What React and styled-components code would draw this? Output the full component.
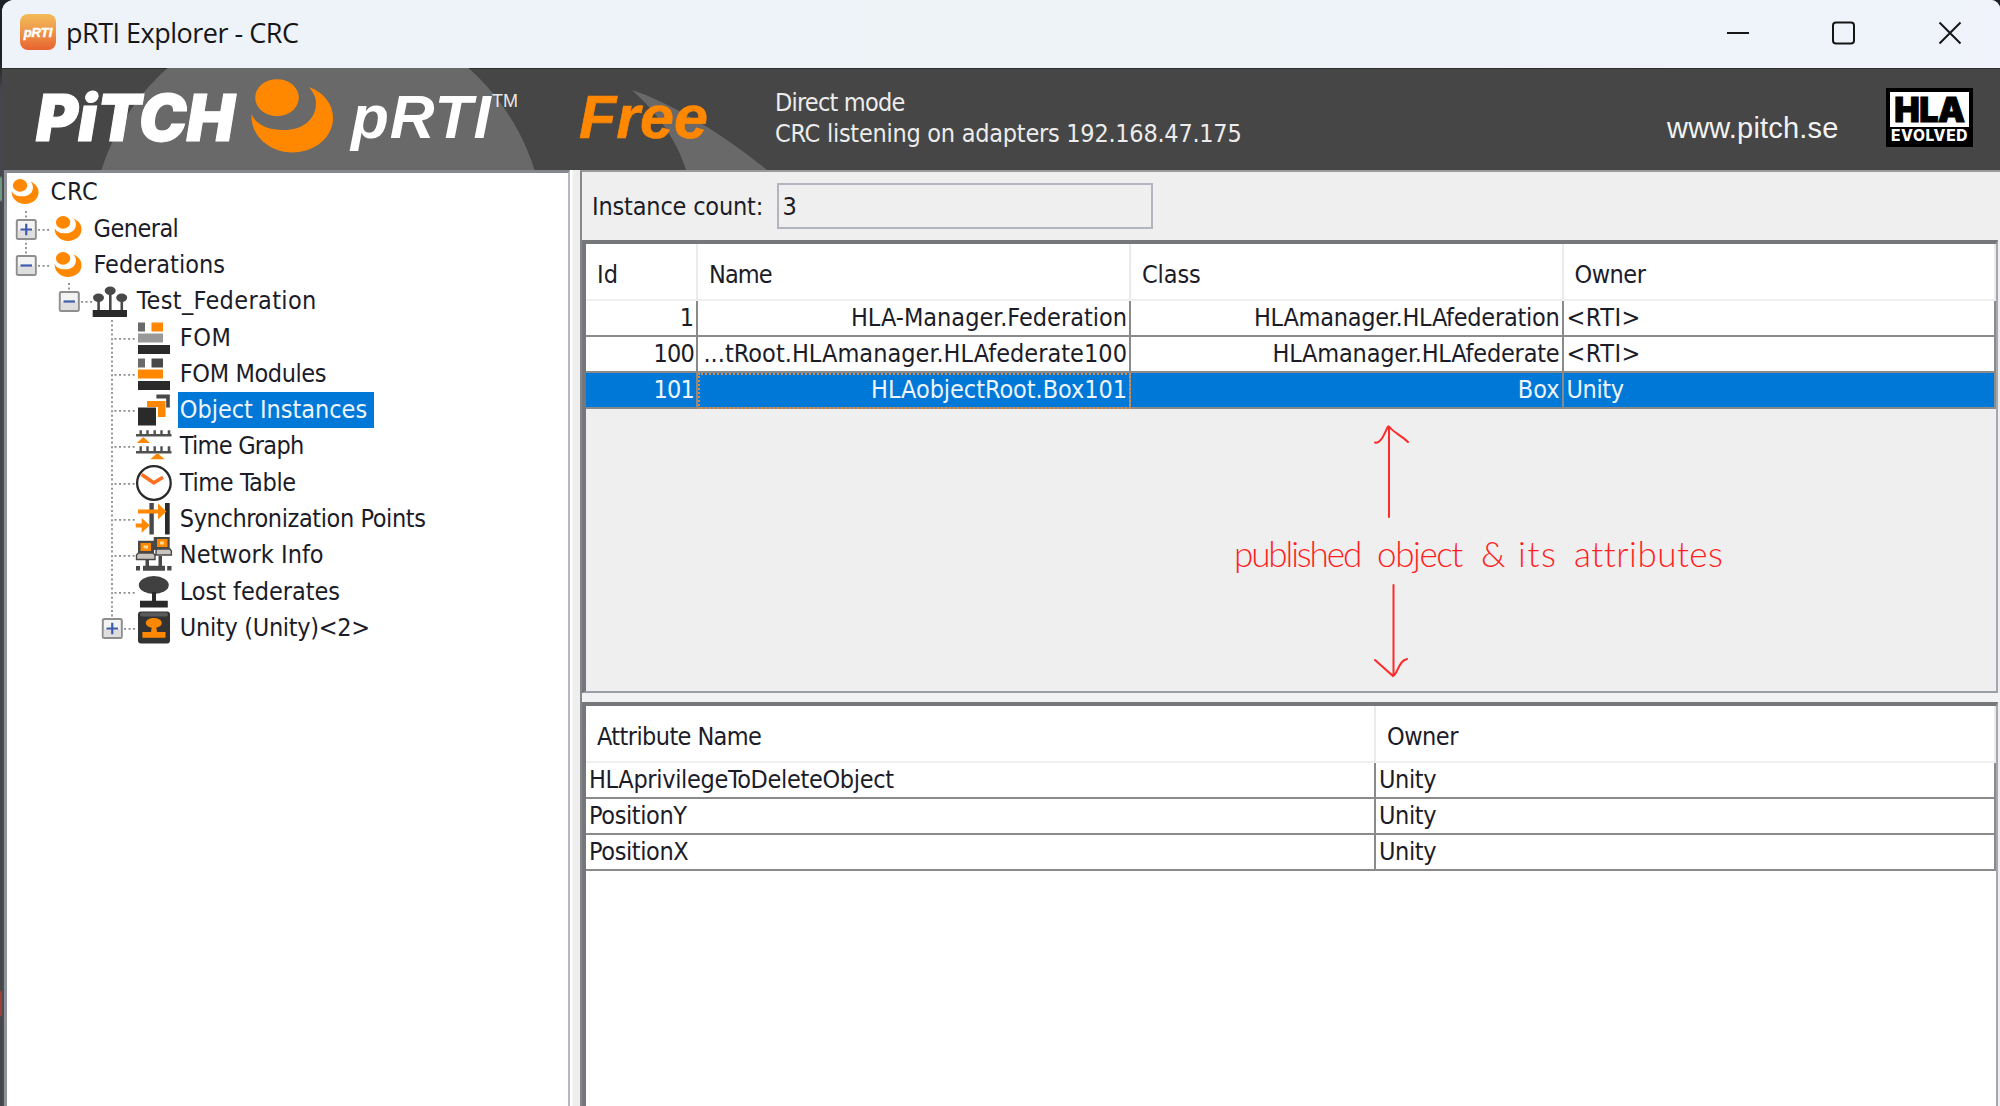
import React from "react";
import styled, { createGlobalStyle, css } from "styled-components";

const Global = createGlobalStyle`
  * { box-sizing: border-box; }
  body { margin: 0; background: #33363b; overflow: hidden; }
`;

const ORANGE = "#ff8800";
const uiFont = css`
  font-family: "DejaVu Sans Condensed", "DejaVu Sans", sans-serif;
  font-stretch: condensed;
  font-size: 25px;
`;

const Desktop = styled.div`
  width: 2000px;
  height: 1106px;
  padding-left: 2px;
  background: linear-gradient(#1d2024 0 60px, #44474d 90px 176px, #6f9880 178px 200px, #45464a 202px 990px, #9a4038 992px 1015px, #45464a 1017px);
  overflow: hidden;
`;
const Win = styled.div`
  display: flex;
  flex-direction: column;
  height: 1106px;
  border-radius: 12px 9px 0 0;
  overflow: hidden;
  background: #efefef;
`;

/* ---------- title bar ---------- */
const TitleBar = styled.div`
  height: 68px;
  flex: none;
  display: flex;
  align-items: center;
  padding: 0 38px 3px 18px;
  background: linear-gradient(90deg, #eef3f9, #eef3f8 60%, #f0f3fb);
`;
const AppIcon = styled.div`
  width: 36px;
  height: 36px;
  margin-top: -2px;
  border-radius: 8px;
  background: linear-gradient(#f3bb58, #ee9a4c 45%, #e8622f);
  color: #fff;
  font: italic 700 13px/37px "Liberation Sans", sans-serif;
  text-align: center;
  -webkit-text-stroke: 0.5px #fff;
`;
const Title = styled.div`
  margin: 0 auto 0 10px;
  font: 400 27px/40px "Open Sans", sans-serif;
  letter-spacing: -0.5px;
  color: #161616;
`;
const Controls = styled.div`
  display: flex;
  gap: 82px;
  svg { display: block; }
`;

/* ---------- banner ---------- */
const Banner = styled.header`
  position: relative;
  flex: none;
  display: flex;
  height: 102px;
  background: #464646;
  border-top: 1px solid #2e2e2e;
  white-space: nowrap;
`;
const Backdrop = styled.svg`
  position: absolute;
  left: 0;
  top: -1px;
`;
const Word = styled.div`
  position: relative;
  flex: none;
  width: ${(p) => p.$w}px;
  margin-left: ${(p) => p.$ml || 0}px;
  padding-top: ${(p) => p.$pt || 0}px;
  color: ${(p) => p.$color || "#fff"};
  font: italic ${(p) => (p.$black ? 900 : 700)} ${(p) => p.$size}px/70px ${(p) => (p.$black ? "Inter," : "")} "Liberation Sans", Arial, sans-serif;
  letter-spacing: ${(p) => p.$ls || 0}px;
  -webkit-text-stroke: ${(p) => p.$stroke || 0}px ${(p) => p.$color || "#fff"};
`;
const Trade = styled.div`
  position: relative;
  width: 62px;
  padding: 22px 0 0 1px;
  color: #e8e8e8;
  font: 400 18px/20px "Liberation Sans", Arial, sans-serif;
`;
const Mode = styled.div`
  ${uiFont}
  position: relative;
  color: #ececec;
  line-height: 31.6px;
  padding-top: 17.5px;
  margin-left: 66px;
  flex: 1;
`;
const Site = styled.div`
  padding-top: 41px;
  width: 219px;
  color: #f2f2f2;
  font: 400 29px/36px "Liberation Sans", Arial, sans-serif;
  letter-spacing: 0.2px;
`;
const Hla = styled.div`
  width: 87px;
  height: 59px;
  margin: 19px 27px 0 0;
  border: 4px solid #000;
  border-bottom-width: 3px;
  background: #000;
  text-align: center;
`;
const HlaTop = styled.div`
  height: 35px;
  background: #fff;
  color: #000;
  font: 900 34px/35px Inter, "Liberation Sans", sans-serif;
  letter-spacing: -0.5px;
  -webkit-text-stroke: 1px #000;
`;
const HlaBottom = styled.div`
  color: #fff;
  font: 800 15.5px/18px Inter, "Liberation Sans", sans-serif;
  letter-spacing: 0.6px;
`;

/* ---------- body ---------- */
const Body = styled.div`
  flex: 1;
  display: flex;
  min-height: 0;
  padding-left: 2px;
  background: linear-gradient(90deg, #4a4c50 0 2px, #efefef 2px);
`;
const TreePane = styled.nav`
  width: 566px;
  border-style: solid;
  border-width: 3px 2px 0 3px;
  border-color: #85888e #b3b7bf #fff #8f9298;
  background: #fff;
  padding-top: 1.4px;
`;
const Split = styled.div`
  width: 10px;
  background: linear-gradient(90deg, #fff 0 2px, #eee 3px);
`;
const Right = styled.div`
  flex: 1;
  min-width: 0;
  display: flex;
  flex-direction: column;
  border-left: 2px solid #85878b;
  border-top: 2px solid #9a9a9a;
`;
const Row = styled.div`
  display: flex;
  align-items: center;
  height: 36.3px;
  svg { display: block; flex: none; }
`;
const Indent = styled.span`
  width: ${(p) => p.$n * 43.15}px;
`;
const IconBox = styled.span`
  width: 36.3px;
  height: 36.3px;
  margin-right: 5.7px;
`;
const Label = styled.span`
  ${uiFont}
  line-height: 36.3px;
  height: 36.3px;
  white-space: pre;
  padding: 0 7px 0 1.4px;
  color: ${(p) => (p.$on ? "#eef5ff" : "#1c1c28")};
  background: ${(p) => (p.$on ? "#0078d7" : "transparent")};
  letter-spacing: ${(p) => p.$ls || 0}px;
`;
const Text = styled.span`
  letter-spacing: ${(p) => p.$ls || 0}px;
  white-space: pre;
`;

const CountBar = styled.div`
  ${uiFont}
  height: 68px;
  flex: none;
  display: flex;
  align-items: center;
  padding: 0 0 0 10px;
  color: #1c1c28;
`;
const CountLabel = styled.label`
  width: 184.5px;
  padding-top: 1px;
`;
const CountField = styled.div`
  width: 376px;
  height: 46px;
  border: 2px solid #b3b6bd;
  padding: 1px 0 0 4px;
  line-height: 42px;
`;
const Table = styled.section`
  ${uiFont}
  color: #1c1c28;
  display: flex;
  flex-direction: column;
  border: 4px solid #75777b;
  border-right: 2px solid #a3a7ae;
  border-bottom: ${(p) => (p.$last ? 0 : "2px solid #9a9fa7")};
  margin-right: 2px;
  height: ${(p) => (p.$last ? "auto" : "453px")};
  flex: ${(p) => (p.$last ? 1 : "none")};
  background: ${(p) => (p.$last ? "#fff" : "#efefef")};
  position: relative;
`;
const Line = styled.div`
  display: grid;
  grid-template-columns: ${(p) => p.$cols};
  flex: none;
  height: ${(p) => (p.$head ? 56.5 : 36.3)}px;
  background: ${(p) => (p.$on ? "#0078d7" : "#fff")};
  color: ${(p) => (p.$on ? "#eef5ff" : "#1c1c28")};
`;
const Th = styled.div`
  border-right: 2px solid #ebebeb;
  border-bottom: 2px solid #efefef;
  padding: 4px 0 0 11px;
  line-height: 53px;
  overflow: hidden;
  letter-spacing: ${(p) => p.$ls || 0}px;
`;
const Td = styled.div`
  border-right: 2px solid #8a8a8a;
  border-bottom: 2px solid #8a8a8a;
  padding: 0 2px 0 3px;
  line-height: 34.3px;
  text-align: ${(p) => (p.$r ? "right" : "left")};
  letter-spacing: ${(p) => p.$ls || 0}px;
  overflow: hidden;
  white-space: nowrap;
  ${(p) => p.$focus && css`
    outline: 2px dotted #d98a45;
    outline-offset: -2px;
  `}
`;
const Divider = styled.div`
  height: 9px;
  flex: none;
  background: #f1f2f3;
`;

/* ---------- annotation ---------- */
const Note = styled.div`
  position: absolute;
  left: 649px;
  top: 176px;
  width: 500px;
  height: 265px;
  color: #ff1f1f;
  pointer-events: none;
  svg { position: absolute; left: 0; top: 0; }
`;
const NoteText = styled.div`
  position: absolute;
  left: -1px;
  top: 113px;
  display: flex;
  font: 300 35px/40px Lato, sans-serif;
`;
const NoteWord = styled.span`
  width: ${(p) => p.$w}px;
  letter-spacing: ${(p) => p.$ls}px;
`;

const Swirl = () => (
  <>
    <ellipse cx="277" cy="97.7" rx="21.8" ry="18.5" />
    <path d="M309 87C325 93 333 105 333 118C333 138 314 152.5 292 152.5C270 152.5 250 136 251.5 114C256 125 268 130 284 130C302 130 316 120 316 103C316 97 313 92 309 87Z" />
  </>
);

const D = "#2a2a2a";
const G = "#6a6a6a";
const icons = {
  swirl: (
    <g fill={ORANGE} transform="translate(4.5 5) scale(.33 .34) translate(-251 -79)">
      <Swirl />
    </g>
  ),
  federation: (
    <g fill={D}>
      <g fill="#484848">
        <ellipse cx="5.5" cy="14.8" rx="5.5" ry="4.2" />
        <ellipse cx="17.2" cy="7.8" rx="5.5" ry="4.2" />
        <ellipse cx="28.7" cy="14.8" rx="5.5" ry="4.2" />
        <path d="M4.3 15h2.6v13H4.3zM16 8h2.6v20H16zM27.5 15h2.6v13h-2.6z" />
      </g>
      <path d="M-.3 27H34v7H-.3z" />
    </g>
  ),
  fom: (
    <g>
      <path fill={G} d="M2 2.5h7v9H2z" />
      <path fill={ORANGE} d="M15.5 2.5H27v9H15.5z" />
      <path fill="#999" d="M2 13.5h25v9H2z" />
      <path fill={D} d="M2 25h32v9H2z" />
    </g>
  ),
  modules: (
    <g>
      <path fill={G} d="M2 2.5h7v9H2z" />
      <path fill="#484848" d="M15.5 2.5H27v9H15.5z" />
      <path fill={ORANGE} d="M2 13.5h25v9H2z" />
      <path fill={D} d="M2 25h32v9H2z" />
    </g>
  ),
  instances: (
    <g>
      <path fill={D} d="M2 15.5h18v18H2z" />
      <path fill={ORANGE} d="M11 9h18.5v16H22v-10H11z" />
      <path fill="#484848" d="M20.4 2.5h13.4v13h-3.6v-9h-9.8z" />
    </g>
  ),
  graph: (
    <g fill="#505050">
      <path d="M0 6h35.5v2.6H0zM3.5 2.2h2.4V7H3.5zM10.3 2.2h2.4V7h-2.4zM17.5 2.2h2.4V7h-2.4zM24.3 2.2h2.4V7h-2.4zM31.7 2.2h2.6V7h-2.6z" />
      <path d="M0 23h35.5v2.6H0zM3.5 18.2h2.4V24H3.5zM10.3 18.2h2.4V24h-2.4zM17.5 18.2h2.4V24h-2.4zM24.3 18.2h2.4V24h-2.4zM31.7 18.2h2.6V24h-2.6z" />
      <path fill={ORANGE} d="M7.4 9l6.6 6H.8zM21.4 25l7.2 6.2H14.2z" />
    </g>
  ),
  clock: (
    <g fill="none">
      <circle cx="17.9" cy="18" r="16.8" stroke={D} strokeWidth="2.3" fill="#fff" />
      <path d="M5.6 9.6L17.8 17.8L27 12.3" stroke="#ff6f20" strokeWidth="3.6" />
    </g>
  ),
  sync: (
    <g fill={D}>
      <path fill="#484848" d="M13.4 2h4.4v31.5h-4.4z" />
      <path d="M29 2h4.7v31.5H29z" />
      <path fill={ORANGE} d="M2 8.6h20v-6l8.5 8-8.5 8v-6H2zM-.3 22.4h6v-5.500l8 7.400-8 7.400v-5.300h-6z" />
    </g>
  ),
  network: (
    <g>
      <path fill="#484848" d="M17.7 0h16v13h-16zM2 3.7h16v13H2zM9.5 22h3.5v7H9.5zM22.5 19H26v10h-3.5zM7 28.7h22v5H7zM0 29h4v4.5H0zM31.2 29h4.3v4.5h-4.3z" />
      <path fill={ORANGE} d="M21 2h10.5v8H21zM4.5 6H15v8H4.5z" />
      <path fill="#ffd9a0" d="M24 4.5h4v3h-4zM7.5 8.5H12v3H7.5z" />
      <path fill="#c9c4bd" stroke="#484848" strokeWidth="1.4" d="M20 14l1-2h13l1.4 2v4H20zM.5 18l2-2H17l2 2v4.5H.5z" />
    </g>
  ),
  lost: (
    <g fill={D}>
      <ellipse cx="17.8" cy="11" rx="15" ry="9" fill="#404040" />
      <path d="M16 18h4v9h-4zM4 26.7h27.8v6.8H4z" />
    </g>
  ),
  unity: (
    <g>
      <rect x="2" y="1.5" width="32" height="32" rx="3" fill="#333" />
      <rect x="4" y="2.5" width="28" height="4" rx="2" fill="#5a5a5a" />
      <g fill={ORANGE}>
        <ellipse cx="17.8" cy="13" rx="8" ry="5" />
        <path d="M16 16h4l1 6h8.5v5.8H6.4V22H15z" />
      </g>
    </g>
  ),
};

const Branch = ({ full, box }) => (
  <svg width="43.15" height="36.3" viewBox="0 0 43.15 36.3">
    <g stroke="#8c8c8c" strokeWidth="1.8" strokeDasharray="2 2.54">
      <path d={full ? "M19 0V36.3" : "M19 0V18"} />
      <path d={box ? "M31 18.8H43" : "M21.5 18.8H45"} />
    </g>
    {box && (
      <g>
        <rect x="9.8" y="8.9" width="19" height="19" rx="1.5" fill="#f3f3f3" stroke="#8e8e8e" strokeWidth="2" />
        <path d="M10.8 19h17v8h-17z" fill="#dedede" />
        <path d={box === "+" ? "M13.5 18.5h11.5M19.25 12.7v11.5" : "M13.5 18.5h11.5"} stroke="#3f5cab" strokeWidth="2.2" />
      </g>
    )}
  </svg>
);

const tree = [
  { t: "CRC", d: 0, i: "swirl", ls: 0.8 },
  { t: "General", d: 1, i: "swirl", full: true, box: "+", ls: -0.55 },
  { t: "Federations", d: 1, i: "swirl", box: "-", ls: 0 },
  { t: "Test_Federation", d: 2, i: "federation", box: "-", ls: 0.35 },
  { t: "FOM", d: 3, i: "fom", full: true, ls: 0.5 },
  { t: "FOM Modules", d: 3, i: "modules", full: true, ls: -0.4 },
  { t: "Object Instances", d: 3, i: "instances", full: true, on: true, ls: -0.03 },
  { t: "Time Graph", d: 3, i: "graph", full: true, ls: -0.75 },
  { t: "Time Table", d: 3, i: "clock", full: true, ls: -0.4 },
  { t: "Synchronization Points", d: 3, i: "sync", full: true, ls: -0.41 },
  { t: "Network Info", d: 3, i: "network", full: true, ls: 0.02 },
  { t: "Lost federates", d: 3, i: "lost", full: true, ls: -0.05 },
  { t: "Unity (Unity)<2>", d: 3, i: "unity", box: "+", ls: -0.3 },
];

const C1 = "112px 433px 432.5px 1fr";
const C2 = "790px 1fr";

export default function App() {
  return (
    <Desktop>
      <Global />
      <Win>
        <TitleBar>
          <AppIcon>pRTI</AppIcon>
          <Title>pRTI Explorer - CRC</Title>
          <Controls>
            <svg width="24" height="24" fill="none" stroke="#161616" strokeWidth="2"><path d="M1 12h22" /></svg>
            <svg width="24" height="24" fill="none" stroke="#161616" strokeWidth="2"><rect x="1" y="1.5" width="21" height="21" rx="3" /></svg>
            <svg width="24" height="24" fill="none" stroke="#161616" strokeWidth="2"><path d="M1.5 1.5l21 21M22.5 1.5l-21 21" /></svg>
          </Controls>
        </TitleBar>
        <Banner>
          <Backdrop width="1000" height="102" viewBox="2 68 1000 102">
            <circle cx="318" cy="238" r="227" fill="#696969" />
            <path d="M632 90C668 102 718 130 767 170H686C676 138 656 112 632 90Z" fill="#696969" />
            <g fill={ORANGE}><Swirl /></g>
          </Backdrop>
          <Word $w={315} $ml={34} $pt={14} $size={64} $stroke={1} $black>PiTCH</Word>
          <Word $w={140} $pt={13} $size={62} $ls={1}>pRTI</Word>
          <Trade>TM</Trade>
          <Word $w={130} $ml={26} $pt={13} $size={61} $color={ORANGE} $stroke={0.6}>Free</Word>
          <Mode>
            <div><Text $ls={-0.8}>Direct mode</Text></div>
            <div><Text $ls={-0.26}>CRC listening on adapters 192.168.47.175</Text></div>
          </Mode>
          <Site>www.pitch.se</Site>
          <Hla>
            <HlaTop>HLA</HlaTop>
            <HlaBottom>EVOLVED</HlaBottom>
          </Hla>
        </Banner>
        <Body>
          <TreePane>
            {tree.map((r) => (
              <Row key={r.t}>
                {r.d > 1 && <Indent $n={r.d - 1} />}
                {r.d > 0 && <Branch full={r.full} box={r.box} />}
                <IconBox><svg width="36.3" height="36.3" viewBox="0 0 36.3 36.3" overflow="visible">{icons[r.i]}</svg></IconBox>
                <Label $on={r.on} $ls={r.ls}>{r.t}</Label>
              </Row>
            ))}
          </TreePane>
          <Split />
          <Right>
            <CountBar>
              <CountLabel><Text $ls={-0.18}>Instance count:</Text></CountLabel>
              <CountField>3</CountField>
            </CountBar>
            <Table>
              <Line $head $cols={C1}>
                <Th>Id</Th><Th $ls={-0.9}>Name</Th><Th $ls={-0.1}>Class</Th><Th $ls={-0.5}>Owner</Th>
              </Line>
              <Line $cols={C1}>
                <Td $r>1</Td><Td $r>HLA-Manager.Federation</Td><Td $r $ls={-0.26}>HLAmanager.HLAfederation</Td><Td $ls={0.5}>&lt;RTI&gt;</Td>
              </Line>
              <Line $cols={C1}>
                <Td $r $ls={-0.8}>100</Td><Td $r $ls={0.03}>...tRoot.HLAmanager.HLAfederate100</Td><Td $r $ls={-0.2}>HLAmanager.HLAfederate</Td><Td $ls={0.5}>&lt;RTI&gt;</Td>
              </Line>
              <Line $cols={C1} $on>
                <Td $r $ls={-0.8}>101</Td><Td $r $focus $ls={-0.05}>HLAobjectRoot.Box101</Td><Td $r>Box</Td><Td $ls={-0.4}>Unity</Td>
              </Line>
              <Note>
                <svg width="500" height="265" viewBox="1235 420 500 265" fill="none" stroke="#ff2a2a" strokeWidth="2" strokeLinecap="round">
                  <path d="M1389 517V427M1375 442.5C1381 444 1384 434 1388 426.5M1389 426.5C1394 433 1401 435 1408 442" />
                  <path d="M1393.5 585V675M1375 660L1393 676C1398 674 1398 661 1407 659" />
                </svg>
                <NoteText>
                  <NoteWord $w={143} $ls={-2.1}>published</NoteWord>
                  <NoteWord $w={104} $ls={-1.4}>object</NoteWord>
                  <NoteWord $w={37} $ls={0}>&amp;</NoteWord>
                  <NoteWord $w={56} $ls={1.6}>its</NoteWord>
                  <NoteWord $w={150} $ls={0.5}>attributes</NoteWord>
                </NoteText>
              </Note>
            </Table>
            <Divider />
            <Table $last>
              <Line $head $cols={C2}><Th $ls={-0.6}>Attribute Name</Th><Th $ls={-0.5}>Owner</Th></Line>
              <Line $cols={C2}><Td $ls={-0.33}>HLAprivilegeToDeleteObject</Td><Td $ls={-0.4}>Unity</Td></Line>
              <Line $cols={C2}><Td $ls={-0.4}>PositionY</Td><Td $ls={-0.4}>Unity</Td></Line>
              <Line $cols={C2}><Td $ls={-0.4}>PositionX</Td><Td $ls={-0.4}>Unity</Td></Line>
            </Table>
          </Right>
        </Body>
      </Win>
    </Desktop>
  );
}
